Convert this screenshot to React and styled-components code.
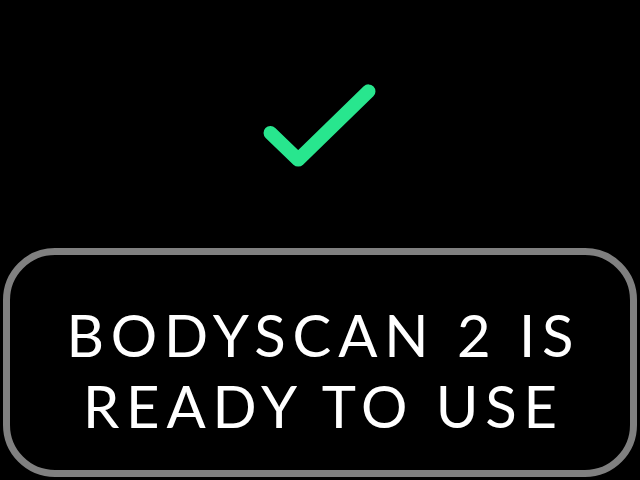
import React from "react";
import styled, { createGlobalStyle } from "styled-components";

const Global = createGlobalStyle`
  html, body { margin: 0; padding: 0; background: #000; }
  body { width: 640px; height: 480px; overflow: hidden; }
`;

const Screen = styled.div`
  width: 640px;
  height: 480px;
  background: #000;
  display: flex;
  flex-direction: column;
  box-sizing: border-box;
  padding: 0 3px 3px;
`;

const IconArea = styled.div`
  height: 248px;
  display: flex;
  justify-content: center;
  align-items: flex-start;
`;

const Card = styled.div`
  flex: 1;
  box-sizing: border-box;
  border: 7px solid #808080;
  border-radius: 52px;
  display: flex;
  flex-direction: column;
  align-items: center;
  padding-top: 44px;
`;

const Message = styled.div`
  font-family: "Lato", "Noto Sans", sans-serif;
  font-weight: 400;
  font-size: 58px;
  line-height: 71px;
  color: #fff;
  text-align: center;
  letter-spacing: 6.8px;
  padding-left: 6.8px;
  text-transform: uppercase;
`;

const Check = () => (
  <svg width="640" height="248" viewBox="0 0 640 248">
    <polyline
      points="270,133 298,160 369,91"
      fill="none"
      stroke="#28e68e"
      strokeWidth="14"
      strokeLinecap="round"
      strokeLinejoin="round"
    />
  </svg>
);

export default function App() {
  return (
    <>
      <Global />
      <Screen>
        <IconArea>
          <Check />
        </IconArea>
        <Card>
          <Message>
            BODYSCAN 2 IS
            <br />
            READY TO USE
          </Message>
        </Card>
      </Screen>
    </>
  );
}
